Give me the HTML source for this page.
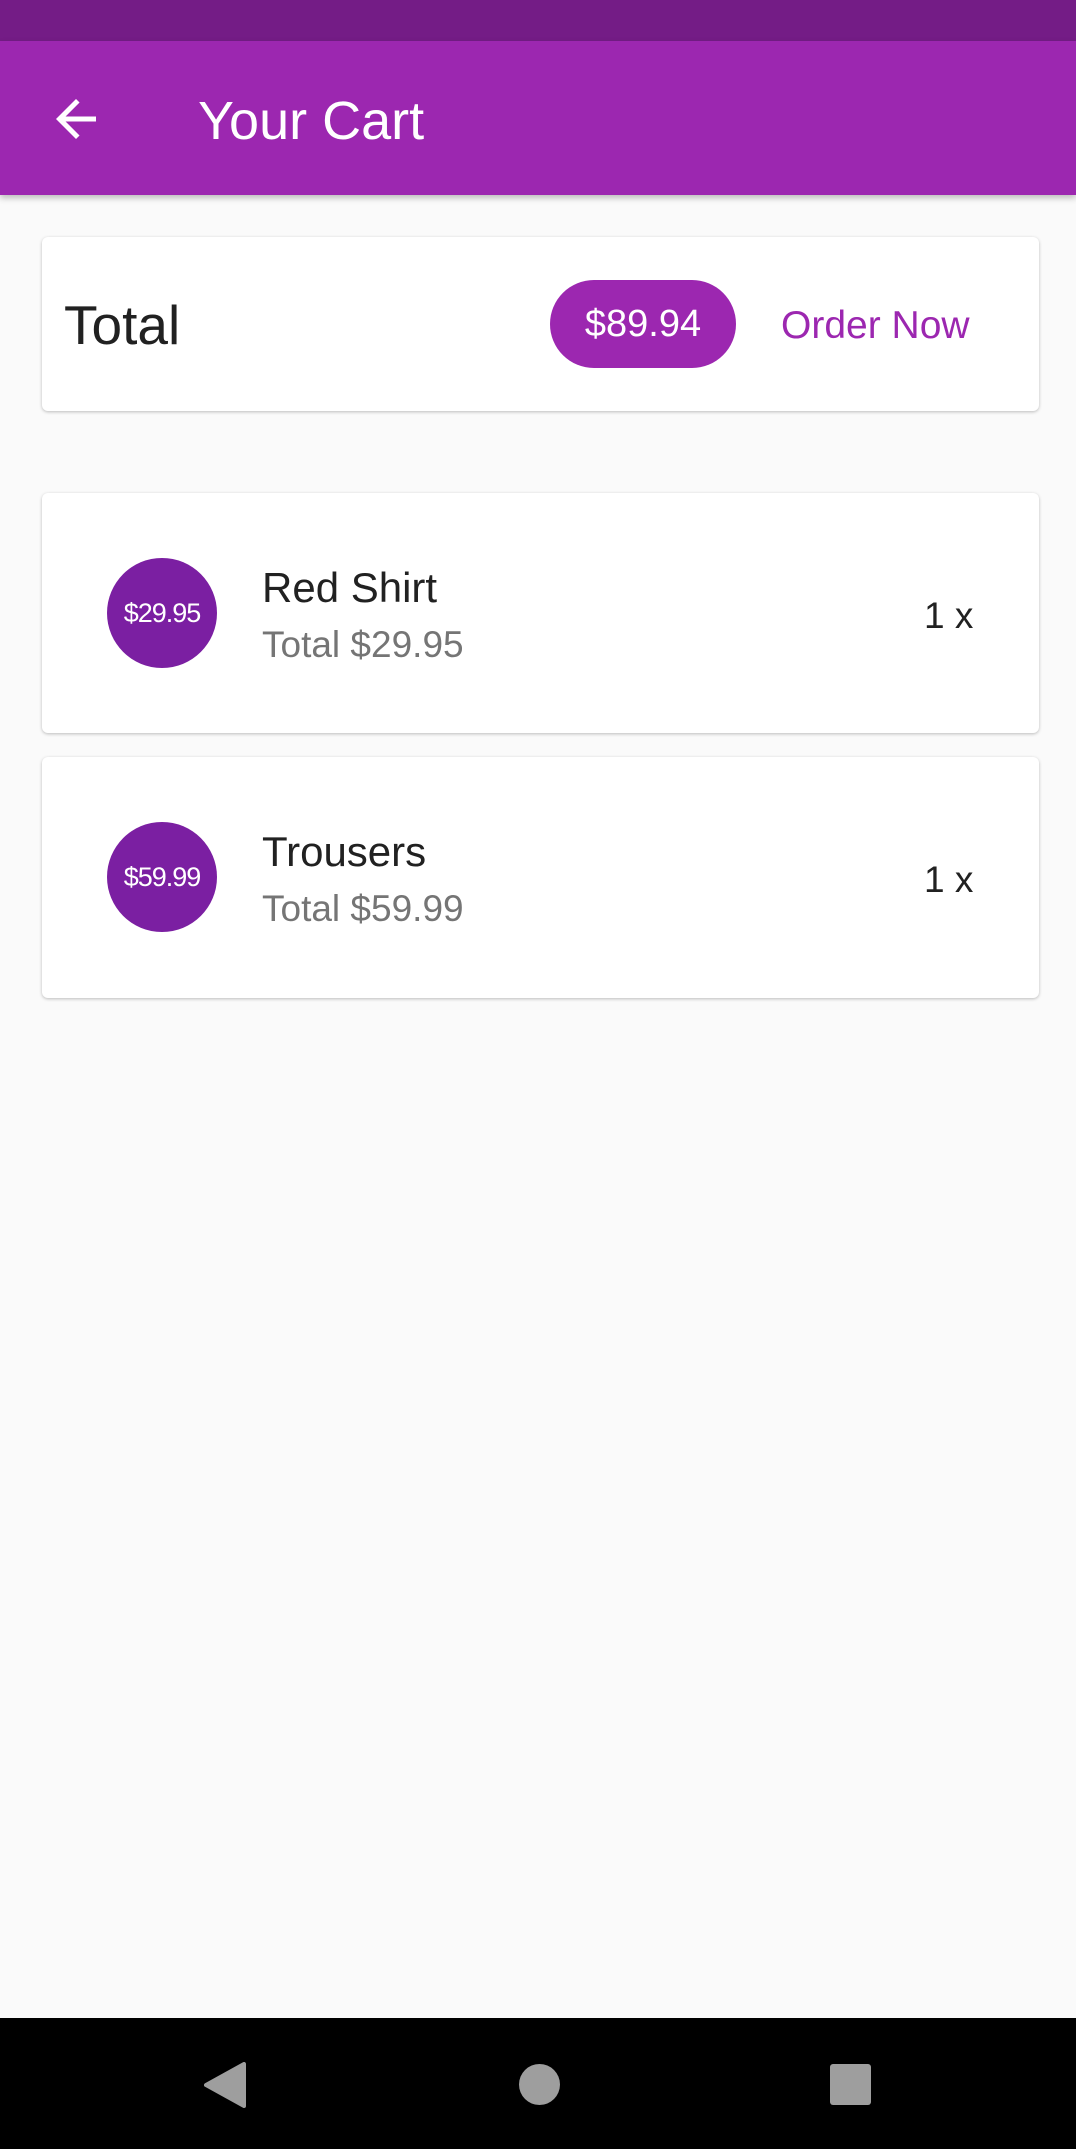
<!DOCTYPE html>
<html><head><style>
*{margin:0;padding:0;box-sizing:border-box}
body{width:1076px;height:2149px;background:#fafafa;font-family:"Liberation Sans",sans-serif;position:relative;overflow:hidden}
.abs{position:absolute}
.card{position:absolute;left:42px;width:997px;background:#fff;border-radius:6px;box-shadow:0 1px 3px rgba(0,0,0,.25)}
.circ{position:absolute;left:65px;width:110px;height:110px;border-radius:50%;background:#7b1fa2;color:#fff;font-size:27px;display:flex;align-items:center;justify-content:center;letter-spacing:-1px}
.t{position:absolute;left:220px;font-size:42px;color:#212121;white-space:nowrap}
.s{position:absolute;left:220px;font-size:37px;color:#757575;white-space:nowrap}
.q{position:absolute;left:882px;font-size:37px;color:#212121}
</style></head><body>
<div class="abs" style="top:0;left:0;width:1076px;height:41px;background:#741c86"></div>
<div class="abs" style="top:41px;left:0;width:1076px;height:154px;background:#9c27b0;box-shadow:0 3px 6px rgba(0,0,0,.25)">
<svg class="abs" style="left:46px;top:48px" width="60" height="60" viewBox="0 0 24 24"><path d="M20 11H7.83l5.59-5.59L12 4l-8 8 8 8 1.41-1.41L7.83 13H20v-2z" fill="#fff"/></svg>
<div class="abs" style="left:198px;top:49px;font-size:54px;color:#fff">Your Cart</div>
</div>
<div class="card" style="top:237px;height:174px">
<div class="abs" style="left:22px;top:56px;font-size:55px;color:#212121">Total</div>
<div class="abs" style="left:508px;top:43px;width:186px;height:88px;border-radius:44px;background:#9c27b0;color:#fff;font-size:38px;display:flex;align-items:center;justify-content:center">$89.94</div>
<div class="abs" style="left:739px;top:67px;font-size:39px;color:#9c27b0">Order Now</div>
</div>
<div class="card" style="top:493px;height:240px">
<div class="circ" style="top:65px">$29.95</div>
<div class="t" style="top:71px">Red Shirt</div>
<div class="s" style="top:131px">Total $29.95</div>
<div class="q" style="top:102px">1 x</div>
</div>
<div class="card" style="top:757px;height:241px">
<div class="circ" style="top:65px">$59.99</div>
<div class="t" style="top:71px">Trousers</div>
<div class="s" style="top:131px">Total $59.99</div>
<div class="q" style="top:102px">1 x</div>
</div>
<div class="abs" style="top:2018px;left:0;width:1076px;height:131px;background:#000">
<svg class="abs" style="left:204px;top:44px" width="42" height="46"><polygon points="40,2 40,44 2,23" fill="#9e9e9e" stroke="#9e9e9e" stroke-linejoin="round" stroke-width="4"/></svg>
<div class="abs" style="left:519px;top:46px;width:41px;height:41px;border-radius:50%;background:#9e9e9e"></div>
<div class="abs" style="left:830px;top:46px;width:41px;height:41px;border-radius:3px;background:#9e9e9e"></div>
</div>
</body></html>
